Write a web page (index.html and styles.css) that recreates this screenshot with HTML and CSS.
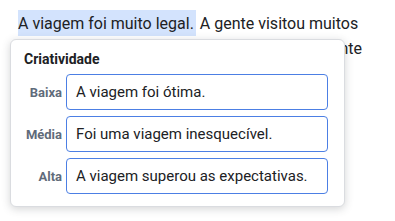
FILE: index.html
```html
<!DOCTYPE html>
<html lang="pt">
<head>
<meta charset="utf-8">
<link rel="stylesheet" href="styles.css">
</head>
<body>
<div class="page">
  <p class="text"><span class="hl">A viagem foi muito legal.</span> A gente visitou muitos<br>lugares lindos, e conheceu muita gente diferente<br>e voltou cansada mas feliz.</p>
  <div class="popup">
    <div class="title">Criatividade</div>
    <div class="rows">
      <div class="row"><span class="label">Baixa</span><div class="field">A viagem foi ótima.</div></div>
      <div class="row"><span class="label">Média</span><div class="field">Foi uma viagem inesquecível.</div></div>
      <div class="row"><span class="label">Alta</span><div class="field">A viagem superou as expectativas.</div></div>
    </div>
  </div>
</div>
</body>
</html>
```
FILE: styles.css
```css
html, body { margin: 0; padding: 0; background: #fff; }
body { font-family: Roboto, "Noto Sans", sans-serif; }
.page { position: relative; width: 395px; height: 221px; overflow: hidden; }
.text {
  margin: 0;
  padding: 11px 0 0 18px;
  font-size: 16px;
  line-height: 25px;
  color: #202124;
  white-space: nowrap;
}
.hl { background: #d3e3fd; padding: 4px 2px 3px 0; }
.popup {
  position: absolute;
  left: 10px;
  top: 39px;
  width: 335px;
  height: 168px;
  box-sizing: border-box;
  background: #fff;
  border: 1px solid #dadce0;
  border-radius: 6px;
  box-shadow: 0 2px 8px rgba(60, 64, 67, 0.22);
  padding: 9px 16px 0 13px;
}
.title {
  font-size: 14px;
  font-weight: 700;
  color: #202124;
  line-height: 20px;
  margin-bottom: 5px;
}
.rows { display: flex; flex-direction: column; gap: 6px; }
.row { display: flex; align-items: center; gap: 4px; }
.label {
  width: 38px;
  text-align: right;
  font-size: 13px;
  font-weight: 700;
  color: #5f6b7a;
}
.field {
  flex: 1;
  height: 36px;
  box-sizing: border-box;
  border: 1px solid #4c7fe4;
  border-radius: 4px;
  padding: 0 9px;
  display: flex;
  align-items: center;
  font-size: 15px;
  color: #202124;
}
```
